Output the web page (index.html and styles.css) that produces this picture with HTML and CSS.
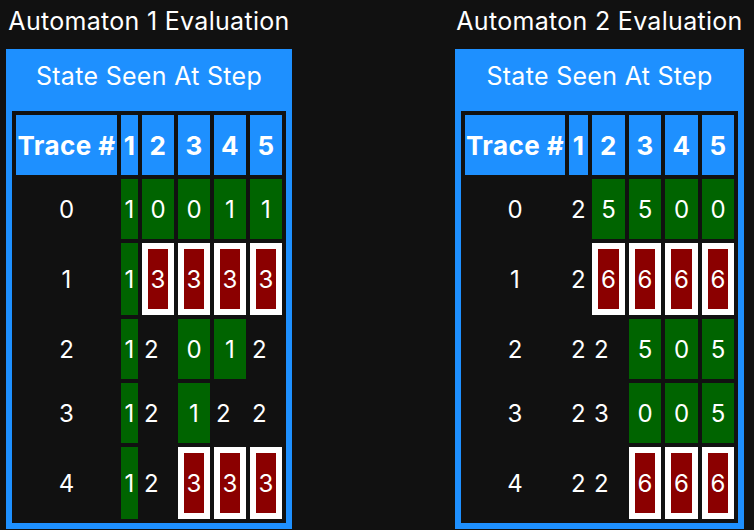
FILE: index.html
```html
<!DOCTYPE html>
<html lang="en">
<head>
<meta charset="utf-8">
<title>Automaton Evaluation</title>
<link rel="stylesheet" href="styles.css">
</head>
<body>
<main class="page">
  <section class="panel">
    <h2 class="title">Automaton 1 Evaluation</h2>
    <div class="box">
      <div class="caption">State Seen At Step</div>
      <div class="grid grid-a1">
        <div class="hd">Trace #</div><div class="hd">1</div><div class="hd">2</div><div class="hd">3</div><div class="hd">4</div><div class="hd">5</div>

        <div class="tr">0</div><div class="v ok">1</div><div class="v ok">0</div><div class="v ok">0</div><div class="v ok">1</div><div class="v ok">1</div>

        <div class="tr">1</div><div class="v ok">1</div><div class="v bad">3</div><div class="v bad">3</div><div class="v bad">3</div><div class="v bad">3</div>

        <div class="tr">2</div><div class="v ok">1</div><div class="v">2</div><div class="v ok">0</div><div class="v ok">1</div><div class="v">2</div>

        <div class="tr">3</div><div class="v ok">1</div><div class="v">2</div><div class="v ok">1</div><div class="v">2</div><div class="v">2</div>

        <div class="tr">4</div><div class="v ok">1</div><div class="v">2</div><div class="v bad">3</div><div class="v bad">3</div><div class="v bad">3</div>
      </div>
    </div>
  </section>

  <section class="panel">
    <h2 class="title">Automaton 2 Evaluation</h2>
    <div class="box">
      <div class="caption">State Seen At Step</div>
      <div class="grid grid-a2">
        <div class="hd">Trace #</div><div class="hd">1</div><div class="hd">2</div><div class="hd">3</div><div class="hd">4</div><div class="hd">5</div>

        <div class="tr">0</div><div class="v">2</div><div class="v ok">5</div><div class="v ok">5</div><div class="v ok">0</div><div class="v ok">0</div>

        <div class="tr">1</div><div class="v">2</div><div class="v bad">6</div><div class="v bad">6</div><div class="v bad">6</div><div class="v bad">6</div>

        <div class="tr">2</div><div class="v">2</div><div class="v">2</div><div class="v ok">5</div><div class="v ok">0</div><div class="v ok">5</div>

        <div class="tr">3</div><div class="v">2</div><div class="v">3</div><div class="v ok">0</div><div class="v ok">0</div><div class="v ok">5</div>

        <div class="tr">4</div><div class="v">2</div><div class="v">2</div><div class="v bad">6</div><div class="v bad">6</div><div class="v bad">6</div>
      </div>
    </div>
  </section>
</main>
</body>
</html>
```

FILE: styles.css
```css
* {
  box-sizing: border-box;
}

html, body {
  margin: 0;
  padding: 0;
  background: #111111;
}

body {
  font-family: "Inter", "Noto Sans", "Liberation Sans", sans-serif;
  color: #ffffff;
  font-size: 24px;
}

.page {
  display: flex;
  align-items: flex-start;
  gap: 163px;
  padding-left: 6px;
}

.panel {
  display: flex;
  flex-direction: column;
  align-items: stretch;
}

.title {
  margin: 7px 0 13px;
  font-size: 25px;
  font-weight: 400;
  line-height: 29px;
  letter-spacing: 0.3px;
  text-align: center;
  white-space: nowrap;
}

.box {
  border: 6px solid #1e90ff;
}

.caption {
  background: #1e90ff;
  text-align: center;
  font-size: 25px;
  line-height: 29px;
  letter-spacing: 0.3px;
  padding: 7px 0 20px;
  white-space: nowrap;
}

.grid {
  display: grid;
  gap: 4px;
  padding: 4px;
  background: #111111;
}

.grid-a1 {
  grid-template-columns: 101px 17px 32px 32px 32px 32px;
}

.grid-a2 {
  grid-template-columns: 100px 19px 33px 32px 33px 32px;
}

.hd {
  background: #1e90ff;
  font-size: 26px;
  font-weight: 700;
  letter-spacing: 0.4px;
  height: 60px;
  display: flex;
  align-items: center;
  justify-content: center;
  white-space: nowrap;
}

.tr {
  min-height: 60px;
  display: flex;
  align-items: center;
  justify-content: center;
}

.v {
  min-height: 60px;
  display: flex;
  align-items: center;
  justify-content: flex-start;
  padding-left: 2px;
  white-space: nowrap;
}

.ok {
  background: #006400;
  justify-content: center;
  padding-left: 0;
}

.bad {
  background: #8b0000;
  border: 6px solid #ffffff;
  justify-content: center;
  padding-left: 0;
  min-height: 72px;
}
```
